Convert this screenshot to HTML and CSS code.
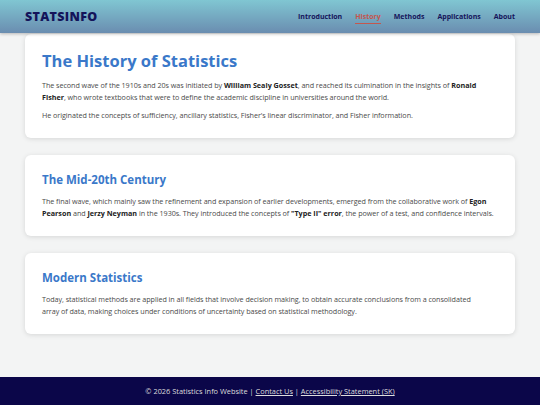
FILE: index.html
```html
<!DOCTYPE html>
<html lang="en">
<head>
<meta charset="utf-8">
<title>StatsInfo - History</title>
<link rel="stylesheet" href="styles.css">
</head>
<body>
<header class="topbar">
  <div class="logo">STATSINFO</div>
  <nav class="nav">
    <a href="#">Introduction</a>
    <a href="#" class="active">History</a>
    <a href="#">Methods</a>
    <a href="#">Applications</a>
    <a href="#">About</a>
  </nav>
</header>
<main class="main">
  <section class="card">
    <h1 class="title">The History of Statistics</h1>
    <p>The second wave of the 1910s and 20s was initiated by <b>William Sealy Gosset</b>, and reached its culmination in the insights of <b>Ronald Fisher</b>, who wrote textbooks that were to define the academic discipline in universities around the world.</p>
    <p>He originated the concepts of sufficiency, ancillary statistics, Fisher's linear discriminator, and Fisher information.</p>
  </section>
  <section class="card">
    <h2 class="subtitle">The Mid-20th Century</h2>
    <p>The final wave, which mainly saw the refinement and expansion of earlier developments, emerged from the collaborative work of <b>Egon Pearson</b> and <b>Jerzy Neyman</b> in the 1930s. They introduced the concepts of <b>"Type II" error</b>, the power of a test, and confidence intervals.</p>
  </section>
  <section class="card">
    <h2 class="subtitle">Modern Statistics</h2>
    <p>Today, statistical methods are applied in all fields that involve decision making, to obtain accurate conclusions from a consolidated<br>array of data, making choices under conditions of uncertainty based on statistical methodology.</p>
  </section>
</main>
<footer class="footer">
  <p class="footer-text">© 2026 Statistics Info Website | <a href="#">Contact Us</a> | <a href="#">Accessibility Statement (SK)</a></p>
</footer>
</body>
</html>
```
FILE: styles.css
```css
* { box-sizing: border-box; }
html, body { margin: 0; padding: 0; }
body {
  font-family: "Open Sans", "DejaVu Sans", sans-serif;
  background: #f3f4f4;
  color: #444;
  width: 540px;
  height: 405px;
  display: flex;
  flex-direction: column;
  overflow: hidden;
}
.topbar {
  height: 33px;
  flex: none;
  display: flex;
  align-items: center;
  justify-content: space-between;
  padding: 0 25px;
  background: linear-gradient(to bottom, #80c6d2, #6a8db0);
  box-shadow: 0 1px 3px rgba(0,0,0,0.25);
  position: relative;
  z-index: 2;
}
.logo {
  font-weight: 800;
  font-size: 12.5px;
  letter-spacing: 0.3px;
  color: #14145a;
}
.nav { display: flex; gap: 13px; }
.nav a {
  font-size: 7px;
  font-weight: 700;
  color: #14145a;
  text-decoration: none;
  padding-top: 3px;
  padding-bottom: 2px;
  border-bottom: 1.3px solid transparent;
}
.nav a.active {
  color: #c4574e;
  border-bottom-color: #c4574e;
}
.main {
  flex: 1;
  display: flex;
  flex-direction: column;
  gap: 17px;
  padding: 1px 25px 0;
}
.card {
  background: #fff;
  border-radius: 6px;
  box-shadow: 0 1px 5px rgba(0,0,0,0.12);
  padding: 17px 17px 17px;
}
.title {
  margin: 0 0 8px;
  font-size: 16.5px;
  font-weight: 700;
  color: #3a78c9;
  line-height: 20px;
}
.subtitle {
  margin: 0 0 7px;
  font-size: 11.5px;
  font-weight: 700;
  color: #3a78c9;
  line-height: 16px;
}
.card p {
  margin: 0 0 6px;
  font-size: 7.2px;
  line-height: 12px;
  letter-spacing: -0.05px;
  color: #4a4a4a;
}
.card p:last-child { margin-bottom: 0; }
.card p b { color: #222; letter-spacing: 0; }
.footer {
  flex: none;
  height: 28px;
  background: #0b0649;
  display: flex;
  align-items: center;
  justify-content: center;
}
.footer-text {
  margin: 0;
  color: #ddd;
  font-size: 7.4px;
  line-height: 10px;
}
.footer-text a { color: #ddd; }
```
